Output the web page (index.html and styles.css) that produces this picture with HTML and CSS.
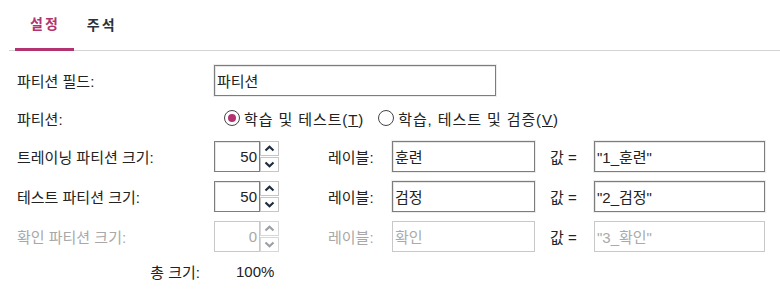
FILE: index.html
```html
<!DOCTYPE html>
<html lang="ko">
<head>
  <meta charset="UTF-8" />
  <title>파티션 설정</title>
  <link rel="stylesheet" href="styles.css">
</head>
<body>

<div class="tabs">
  <div class="tab active">설정</div>
  <div class="tab">주석</div>
</div>

<div class="form">
  <div class="label">파티션 필드:</div>
  <div class="field-wide"><input class="text" type="text" value="파티션" /></div>

  <div class="label">파티션:</div>
  <div class="radios">
    <label class="radio checked"><span class="dot"></span><span>학습 및 테스트(<u>T</u>)</span></label>
    <label class="radio"><span class="dot"></span><span>학습, 테스트 및 검증(<u>V</u>)</span></label>
  </div>

  <div class="label">트레이닝 파티션 크기:</div>
  <div class="spinner">
    <div class="spin-value">50</div>
    <div class="spin-btns">
      <span class="up"><svg width="11" height="7" viewBox="0 0 11 7"><path d="M1.5 5.5 L5.5 1.8 L9.5 5.5" fill="none" stroke="currentColor" stroke-width="2.2"/></svg></span>
      <span class="down"><svg width="11" height="7" viewBox="0 0 11 7"><path d="M1.5 1.5 L5.5 5.2 L9.5 1.5" fill="none" stroke="currentColor" stroke-width="2.2"/></svg></span>
    </div>
  </div>
  <div class="sub-label">레이블:</div>
  <input class="text" type="text" value="훈련" />
  <div class="eq">값 =</div>
  <input class="text" type="text" value="&quot;1_훈련&quot;" />

  <div class="label">테스트 파티션 크기:</div>
  <div class="spinner">
    <div class="spin-value">50</div>
    <div class="spin-btns">
      <span class="up"><svg width="11" height="7" viewBox="0 0 11 7"><path d="M1.5 5.5 L5.5 1.8 L9.5 5.5" fill="none" stroke="currentColor" stroke-width="2.2"/></svg></span>
      <span class="down"><svg width="11" height="7" viewBox="0 0 11 7"><path d="M1.5 1.5 L5.5 5.2 L9.5 1.5" fill="none" stroke="currentColor" stroke-width="2.2"/></svg></span>
    </div>
  </div>
  <div class="sub-label">레이블:</div>
  <input class="text" type="text" value="검정" />
  <div class="eq">값 =</div>
  <input class="text" type="text" value="&quot;2_검정&quot;" />

  <div class="label disabled">확인 파티션 크기:</div>
  <div class="spinner disabled">
    <div class="spin-value">0</div>
    <div class="spin-btns">
      <span class="up"><svg width="11" height="7" viewBox="0 0 11 7"><path d="M1.5 5.5 L5.5 1.8 L9.5 5.5" fill="none" stroke="currentColor" stroke-width="2.2"/></svg></span>
      <span class="down"><svg width="11" height="7" viewBox="0 0 11 7"><path d="M1.5 1.5 L5.5 5.2 L9.5 1.5" fill="none" stroke="currentColor" stroke-width="2.2"/></svg></span>
    </div>
  </div>
  <div class="sub-label disabled">레이블:</div>
  <input class="text" type="text" value="확인" disabled />
  <div class="eq">값 =</div>
  <input class="text" type="text" value="&quot;3_확인&quot;" disabled />

  <div class="label total">총 크기:</div>
  <div class="total-value">100%</div>
</div>

</body>
</html>
```

FILE: styles.css
```css
* {
  box-sizing: border-box;
}
body {
  margin: 0;
  font-family: "Liberation Sans", "Noto Sans CJK KR", sans-serif;
  font-size: 15px;
  color: #222;
  background: #fff;
}

.tabs {
  display: flex;
  margin: 0 0 0 9px;
  padding: 0 0 0 6px;
  height: 51px;
  border-bottom: 1px solid #d4d4d4;
}
.tab {
  padding: 0 13px;
  height: 51px;
  line-height: 50px;
  font-weight: 700;
  font-size: 14px;
  color: #27323d;
  letter-spacing: 2px;
}
.tab.active {
  color: #b2336f;
  border-bottom: 3px solid #b2336f;
  line-height: 48px;
  padding: 0 14px 0 15px;
}

.form {
  display: grid;
  grid-template-columns: 197px 65px 113px 143px 59px 171px;
  grid-template-rows: 30px 26px 30px 30px 30px 20px;
  row-gap: 10px;
  align-items: center;
  padding: 14px 0 0 17px;
}

.label {
  grid-column: 1;
  white-space: nowrap;
}
.label.total {
  text-align: right;
  padding-right: 14px;
}
.disabled {
  color: #a8a8a8;
}

.field-wide {
  grid-column: 2 / -1;
}
.field-wide .text {
  width: 282px;
}

.text {
  height: 31px;
  width: 100%;
  border: 1px solid #7d7d7d;
  box-shadow: inset 1px 1px 0 #e6e6e6, 0 0 0 1px #ededed;
  padding: 0 2px;
  font: inherit;
  color: #222;
  background: #fff;
  outline: none;
}
.text:disabled {
  border-color: #c8c8c8;
  box-shadow: none;
  color: #aaa;
  background: #fff;
}

.radios {
  grid-column: 2 / -1;
  display: flex;
  align-items: center;
  gap: 14px;
  padding-left: 10px;
  letter-spacing: 0.9px;
}
.radio {
  display: flex;
  align-items: center;
  gap: 4px;
}
.radio u {
  text-underline-offset: 1px;
}
.dot {
  width: 16px;
  height: 16px;
  border: 1px solid #444;
  border-radius: 50%;
  display: flex;
  align-items: center;
  justify-content: center;
  background: #fff;
}
.radio.checked .dot::after {
  content: "";
  width: 8px;
  height: 8px;
  border-radius: 50%;
  background: #b2336f;
}

.spinner {
  display: flex;
  height: 31px;
}
.spin-value {
  width: 46px;
  border: 1px solid #7d7d7d;
  box-shadow: inset 1px 1px 0 #e6e6e6;
  text-align: right;
  padding-right: 2px;
  line-height: 29px;
}
.spin-btns {
  width: 19px;
  display: flex;
  flex-direction: column;
  gap: 1px;
}
.spin-btns span {
  flex: 1;
  border: 1px solid #c6c6c6;
  display: flex;
  align-items: center;
  justify-content: center;
  color: #1e2d3d;
}
.spinner.disabled .spin-value {
  border-color: #c8c8c8;
  box-shadow: none;
}
.spinner.disabled .spin-btns span {
  border-color: #d8d8d8;
  color: #9aa0a6;
}

.sub-label {
  padding-left: 49px;
}
.eq {
  padding-left: 15px;
}

.total-value {
  grid-column: 2 / 4;
  padding-left: 22px;
}
```
